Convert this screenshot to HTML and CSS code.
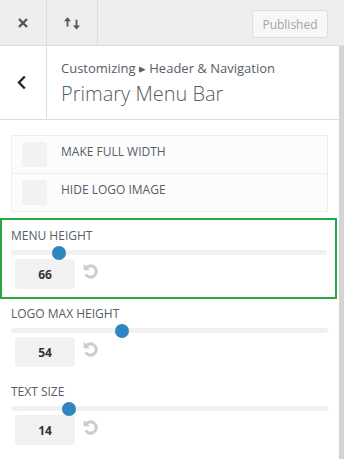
FILE: index.html
```html
<!DOCTYPE html>
<html lang="en">
<head>
    <meta charset="UTF-8">
    <meta name="viewport" content="width=device-width, initial-scale=1.0">
    <title>Primary Menu Bar</title>
    <link rel="stylesheet" href="styles.css">
</head>
<body>
    <div class="customizer">
        <!-- Top actions -->
        <div class="topbar">
            <button class="tb-btn close-btn" title="Close">
                <svg width="10" height="10" viewBox="0 0 10 10"><path d="M1 1L9 9M9 1L1 9" stroke="#50575e" stroke-width="2.4" fill="none"/></svg>
            </button>
            <button class="tb-btn sort-btn" title="Reorder">
                <svg width="17" height="13" viewBox="0 0 17 13">
                    <path d="M3.5 3V9.6" stroke="#50575e" stroke-width="1.8"/>
                    <polygon points="0,4.2 3.5,0.2 7,4.2" fill="#50575e"/>
                    <path d="M12.5 2.6V9.2" stroke="#50575e" stroke-width="1.8"/>
                    <polygon points="9,8.4 12.5,12.4 16,8.4" fill="#50575e"/>
                </svg>
            </button>
            <button class="publish">Published</button>
        </div>

        <div class="main">
            <div class="panel">
                <!-- Section header -->
                <div class="section-head">
                    <button class="back-btn" title="Back">
                        <svg width="10" height="15" viewBox="0 0 10 15"><path d="M7.8 1.5L2 7.5L7.8 13.5" stroke="#23282d" stroke-width="2.4" fill="none"/></svg>
                    </button>
                    <div class="head-text">
                        <span class="crumb">Customizing &#9656; Header &amp; Navigation</span>
                        <h2 class="section-title">Primary Menu Bar</h2>
                    </div>
                </div>

                <!-- Toggles -->
                <div class="checks">
                    <label class="check-row"><span class="checkbox"></span><span class="check-text">Make full width</span></label>
                    <label class="check-row"><span class="checkbox"></span><span class="check-text">Hide logo image</span></label>
                </div>

                <!-- Sliders -->
                <div class="control highlight">
                    <span class="control-label">Menu height</span>
                    <div class="track"><span class="thumb" style="left: 15.1%"></span></div>
                    <div class="value-row">
                        <span class="value">66</span>
                        <svg class="reset" viewBox="0 0 20 20"><path d="M10.25 1.02c5.1 0 8.75 4.04 8.75 9s-3.65 9-8.75 9c-3.2 0-6.02-1.59-7.68-3.99l2.59-1.5c1.1 1.5 3.01 2.49 5.09 2.49 3.33 0 5.99-2.68 5.99-6s-2.66-6-5.99-6c-1.6 0-3.1.63-4.19 1.66l2.09 2.16H1.5V1.02l2.31 2.44c1.58-1.52 3.69-2.44 6.44-2.44z"/></svg>
                    </div>
                </div>

                <div class="control">
                    <span class="control-label">Logo max height</span>
                    <div class="track"><span class="thumb" style="left: 34.9%"></span></div>
                    <div class="value-row">
                        <span class="value">54</span>
                        <svg class="reset" viewBox="0 0 20 20"><path d="M10.25 1.02c5.1 0 8.75 4.04 8.75 9s-3.65 9-8.75 9c-3.2 0-6.02-1.59-7.68-3.99l2.59-1.5c1.1 1.5 3.01 2.49 5.09 2.49 3.33 0 5.99-2.68 5.99-6s-2.66-6-5.99-6c-1.6 0-3.1.63-4.19 1.66l2.09 2.16H1.5V1.02l2.31 2.44c1.58-1.52 3.69-2.44 6.44-2.44z"/></svg>
                    </div>
                </div>

                <div class="control">
                    <span class="control-label">Text size</span>
                    <div class="track"><span class="thumb" style="left: 18.3%"></span></div>
                    <div class="value-row">
                        <span class="value">14</span>
                        <svg class="reset" viewBox="0 0 20 20"><path d="M10.25 1.02c5.1 0 8.75 4.04 8.75 9s-3.65 9-8.75 9c-3.2 0-6.02-1.59-7.68-3.99l2.59-1.5c1.1 1.5 3.01 2.49 5.09 2.49 3.33 0 5.99-2.68 5.99-6s-2.66-6-5.99-6c-1.6 0-3.1.63-4.19 1.66l2.09 2.16H1.5V1.02l2.31 2.44c1.58-1.52 3.69-2.44 6.44-2.44z"/></svg>
                    </div>
                </div>
            </div>
            <div class="scrollbar"></div>
        </div>
    </div>
</body>
</html>
```

FILE: styles.css
```css
* {
    box-sizing: border-box;
    font-family: 'Open Sans', sans-serif;
}

body {
    margin: 0;
    background-color: #ffffff;
    color: #555d66;
    overflow: hidden;
}

.customizer {
    display: flex;
    flex-direction: column;
    width: 344px;
    height: 459px;
}

/* Top bar */
.topbar {
    display: flex;
    align-items: center;
    flex: none;
    height: 46px;
    background-color: #eeeeee;
    border-bottom: 1px solid #dddddd;
}

.tb-btn {
    display: flex;
    justify-content: center;
    align-items: center;
    height: 45px;
    padding: 0;
    border: 0;
    border-right: 1px solid #dddddd;
    background: transparent;
}

.close-btn {
    width: 47px;
}

.sort-btn {
    width: 51px;
    padding-top: 2px;
}

.publish {
    align-self: flex-start;
    margin: 10px 16px 0 auto;
    width: 76px;
    height: 28px;
    padding: 0;
    border: 1px solid #dddddd;
    border-radius: 3px;
    background-color: #f7f7f7;
    color: #a0a5aa;
    font-size: 12px;
}

/* Panel + scrollbar */
.main {
    display: flex;
    flex: 1;
    min-height: 0;
}

.panel {
    flex: 1;
    overflow: hidden;
}

.scrollbar {
    width: 5px;
    background-color: #d4d4d4;
}

/* Section header */
.section-head {
    display: flex;
    height: 74px;
    border-bottom: 1px solid #dddddd;
}

.back-btn {
    display: flex;
    justify-content: center;
    align-items: center;
    width: 47px;
    padding: 0 2px 0 0;
    border: 0;
    border-right: 1px solid #dddddd;
    background: transparent;
}

.head-text {
    padding: 13px 0 0 14px;
}

.crumb {
    display: block;
    font-size: 13px;
    line-height: 18px;
}

.section-title {
    margin: 3px 0 0;
    font-size: 20px;
    font-weight: 300;
    line-height: 28px;
    color: #555d66;
}

/* Checkbox group */
.checks {
    margin: 15px 11px 0;
    border: 1px solid #eeeeee;
    background-color: #fcfcfc;
}

.check-row {
    display: flex;
    align-items: center;
    height: 38px;
    padding-left: 10px;
    border-bottom: 1px solid #eeeeee;
    font-size: 12px;
    text-transform: uppercase;
}

.check-row:last-child {
    height: 37px;
    border-bottom: 0;
}

.checkbox {
    width: 25px;
    height: 25px;
    margin-right: 14px;
    border-radius: 3px;
    background-color: #f2f2f2;
}

.check-text {
    margin-bottom: 6px;
}

/* Slider controls */
.control {
    padding: 7px 11px 10px;
}

.control.highlight {
    margin: 6px 2px 0 0;
    padding: 8px 8px 8px 9px;
    border: 2px solid #27a844;
}

.control-label {
    display: block;
    font-size: 12px;
    line-height: 16px;
    text-transform: uppercase;
}

.track {
    position: relative;
    height: 5px;
    margin-top: 6px;
    border-radius: 3px;
    background-color: #f1f1f1;
}

.thumb {
    position: absolute;
    top: 50%;
    width: 14px;
    height: 14px;
    border-radius: 50%;
    background-color: #2e86c1;
    transform: translate(-50%, -50%);
}

.value-row {
    display: flex;
    margin-top: 4px;
    padding-left: 4px;
}

.value {
    display: flex;
    justify-content: center;
    align-items: center;
    width: 60px;
    height: 30px;
    border-radius: 3px;
    background-color: #f2f2f2;
    color: #32373c;
    font-size: 12px;
    font-weight: bold;
}

.reset {
    width: 15px;
    height: 15px;
    margin: 5px 0 0 8px;
    fill: #cccccc;
    stroke: #cccccc;
    stroke-width: 1.2;
}
```
